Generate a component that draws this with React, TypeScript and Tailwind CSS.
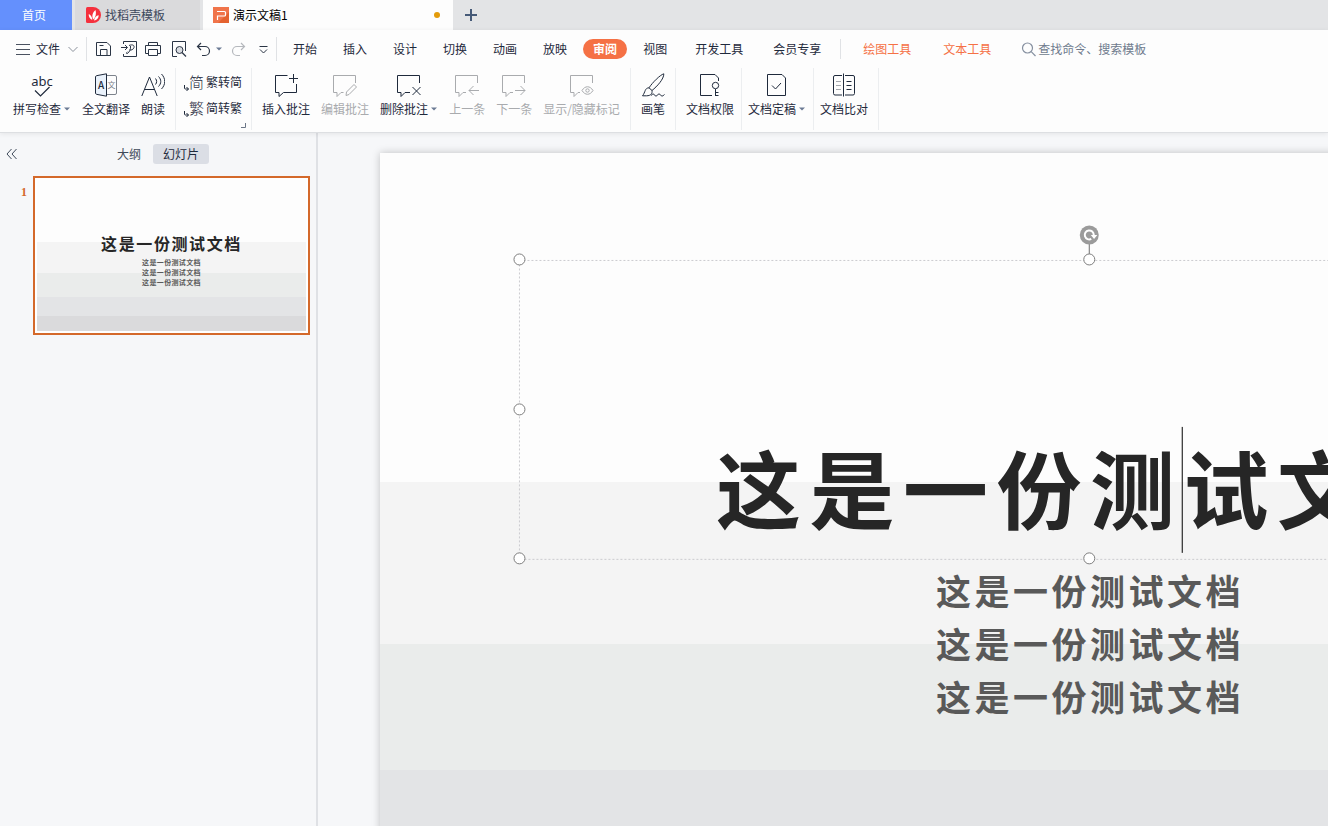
import React, { useState } from "react";

const TITLE = "这是一份测试文档";
const LINES = [TITLE, TITLE, TITLE];

const MAIN_TABS = ["开始", "插入", "设计", "切换", "动画", "放映", "审阅", "视图"];
const WIDE_TABS = ["开发工具", "会员专享"];
const TOOL_TABS = ["绘图工具", "文本工具"];

export default function App() {
    const [activeTab, setActiveTab] = useState("审阅");
    const [panel, setPanel] = useState<"outline" | "slides">("slides");

    return (
        <div className="h-screen flex flex-col overflow-hidden bg-[#f6f7f9] text-xs leading-4 text-[#1f2a3c] font-['Noto_Sans_CJK_SC',sans-serif]">
            <TitleBar />

            <header className="relative z-10 bg-[#fdfdfd] border-b border-[#dddfe2] shadow-[0_1px_5px_rgba(0,0,0,0.08)]">
                {/* Menu row */}
                <div className="flex items-center h-[38px] pl-4 whitespace-nowrap">
                    <button className="flex items-center gap-[6px]">
                        <Icon size={14} d="M0 2.5h14M0 7.5h14M0 12.5h14" className="text-[#4a5260]" />
                        文件
                        <Icon size={10} d="M.5 3l4.5 4.5L9.5 3" className="ml-[2px] text-[#8b919b]" />
                    </button>
                    <Divider className="h-6 ml-2" />
                    <QuickAccess />
                    <Divider className="h-6" />

                    <nav className="flex items-center gap-[6px] ml-[6px]">
                        {MAIN_TABS.map((tab) => (
                            <button
                                key={tab}
                                onClick={() => setActiveTab(tab)}
                                className={`h-5 px-[10px] rounded-full ${activeTab === tab ? "bg-[#f57145] text-white font-bold" : ""}`}
                            >
                                {tab}
                            </button>
                        ))}
                        {WIDE_TABS.map((tab) => (
                            <button
                                key={tab}
                                onClick={() => setActiveTab(tab)}
                                className={`h-5 px-3 rounded-full ${activeTab === tab ? "bg-[#f57145] text-white font-bold" : ""}`}
                            >
                                {tab}
                            </button>
                        ))}
                    </nav>
                    <Divider className="h-5 ml-[7px]" />
                    <nav className="flex items-center gap-2 ml-[10px]">
                        {TOOL_TABS.map((tab) => (
                            <button
                                key={tab}
                                onClick={() => setActiveTab(tab)}
                                className={`h-5 px-3 rounded-full ${activeTab === tab ? "bg-[#f57145] text-white font-bold" : "text-[#f57145]"}`}
                            >
                                {tab}
                            </button>
                        ))}
                    </nav>
                    <label className="flex items-center gap-[2px] ml-[18px] text-[#8690a0]">
                        <svg width="15" height="15" viewBox="0 0 15 15" fill="none" stroke="currentColor" strokeWidth="1.2">
                            <circle cx="6.5" cy="6" r="5" />
                            <path d="M10.200 9.700L14.500 14" />
                        </svg>
                        <input
                            type="text"
                            aria-label="查找命令、搜索模板"
                            placeholder="查找命令、搜索模板"
                            className="w-40 bg-transparent outline-none placeholder:text-[#6f7b8d]"
                        />
                    </label>
                </div>

                <Ribbon />
            </header>

            <div className="flex flex-1 min-h-0">
                {/* Slide panel */}
                <aside className="w-[318px] shrink-0 border-r-2 border-[#dfe1e5]">
                    <div className="flex items-center h-[42px] pl-[6px]">
                        <button aria-label="收起">
                            <Icon size={12} d="M5.5 1L1 6l4.5 5M10.500 1L6 6l4.500 5" className="text-[#3f4a5a]" />
                        </button>
                        <div className="flex items-center gap-px ml-[88px]">
                            <button
                                onClick={() => setPanel("outline")}
                                className={`h-5 px-[11px] rounded-[3px] ${panel === "outline" ? "bg-[#dbdee5]" : "text-[#3f4a5a]"}`}
                            >
                                大纲
                            </button>
                            <button
                                onClick={() => setPanel("slides")}
                                className={`h-5 px-[10px] rounded-[3px] ${panel === "slides" ? "bg-[#dbdee5]" : "text-[#3f4a5a]"}`}
                            >
                                幻灯片
                            </button>
                        </div>
                    </div>
                    <div className="flex mt-px pr-[6px]">
                        <span className="w-[33px] pt-2 pr-[6px] text-right font-bold text-[#d4692b] font-['Liberation_Serif',serif]">1</span>
                        <button className="flex-1 border-2 border-[#d4692b] p-[2px] bg-white">
                            <div className="relative aspect-video overflow-hidden pt-[51px] text-center">
                                <Bands />
                                <p className="relative text-base leading-6 font-bold tracking-widest text-[#262626]">{TITLE}</p>
                                <div className="relative mt-[2px]">
                                    {LINES.map((line, i) => (
                                        <p key={i} className="text-[7px] leading-[10px] font-bold tracking-wider text-[#595959]">{line}</p>
                                    ))}
                                </div>
                            </div>
                        </button>
                    </div>
                </aside>

                {/* Canvas */}
                <main className="flex-1 min-w-0 overflow-hidden pt-5 pl-[62px]">
                    <Slide />
                </main>
            </div>
        </div>
    );
}

// ------------------- Title bar -------------------

function TitleBar() {
    return (
        <div className="flex h-[30px] shrink-0 bg-[#e3e4e6]">
            <button className="w-[72px] pr-1 bg-[#6490fd] text-white">首页</button>
            <button className="flex items-center gap-1 w-[125px] ml-[3px] pl-[11px] bg-[#dadadc] text-[#3d485c]">
                <svg width="15" height="16" viewBox="0 0 15 16">
                    <path d="M0 1.500Q0 0 1.500 0H7a8 8 0 0 1 0 16H1.500Q0 16 0 14.500z" fill="#f5303d" />
                    <path d="M7.300 12.500C5.500 9.500 6.500 5.500 9.500 3c1 3.500.3 7-2.200 9.500zM6.300 13C3.800 12 2.300 9.500 2.800 7c2.200 1.200 3.500 3.300 3.500 6zM8 13.500c.5-3 2-4.800 4.700-5.300 0 2.800-1.700 4.800-4.700 5.300z" fill="#fff" />
                </svg>
                找稻壳模板
            </button>
            <div className="flex items-center w-[250px] ml-[3px] pl-[10px] pr-[13px] bg-[#fdfdfd] text-black">
                <svg width="16" height="16" viewBox="0 0 16 16" className="mr-1">
                    <path d="M0 0h16v16H0z" fill="#f0744a" />
                    <path d="M16 5v11H5z" fill="#e4622f" />
                    <path d="M4 4.500h7.500q1 0 1 1V8q0 1-1 1H4.500v4" fill="none" stroke="#fff" strokeWidth="1.200" />
                </svg>
                演示文稿1
                <span className="ml-auto w-[6px] h-[6px] rounded-full bg-[#e39b0b]" />
            </div>
            <button aria-label="新建" className="w-9 flex items-center justify-center text-[#465a78]">
                <Icon size={12} d="M6 0v12M0 6h12" strokeWidth={2} />
            </button>
        </div>
    );
}

function QuickAccess() {
    return (
        <div className="flex items-center pl-[9px] pr-2 text-[#2b3545]">
            <button aria-label="保存">
                <Icon size={16} d="M.5 1.500h10.500L14.500 5v9.500H.5zM4.500 14.500V8.500h6.500v6M3.500 4.500h4" />
            </button>
            <button aria-label="输出为PDF" className="ml-[9px]">
                <Icon size={16} d="M2.500 3V.5h13v15h-13V13M0 6.500h6M4 4l2.500 2.500L4 9M8 4.500c4-1.500 5.500 0 5 2S10 9.500 8.500 9M9.500 5c.5 3-1 6-3 7.500-1.500.5-1.500-1 0-1.500" />
            </button>
            <button aria-label="打印" className="ml-2">
                <Icon size={16} d="M3.500 4.500v-3h9v3M3.500 12.500h-3v-8h15v8h-3M3.500 8.500h9v6h-9z" />
            </button>
            <button aria-label="打印预览" className="ml-[10px]">
                <svg width="16" height="16" viewBox="0 0 16 16" fill="none" stroke="currentColor">
                    <path d="M6 15.500H1.500V.5h13V10" />
                    <circle cx="8.500" cy="9" r="3.500" fill="#d9dce1" />
                    <path d="M11 11.500l4 4" strokeWidth="1.300" />
                </svg>
            </button>
            <button aria-label="撤销" className="ml-[9px]">
                <Icon size={15} d="M5 1L1.500 4.500 5 8M1.500 4.500H9a4.500 4.500 0 0 1 0 9H6" strokeWidth={1.2} />
            </button>
            <button aria-label="撤销选项" className="ml-1">
                <Caret />
            </button>
            <button aria-label="恢复" className="ml-2 text-[#b5b8bd]">
                <Icon size={15} d="M10 1l3.500 3.500L10 8M13.500 4.500H6a4.500 4.500 0 0 0 0 9h3" strokeWidth={1.2} />
            </button>
            <button aria-label="自定义" className="ml-[13px]">
                <Icon size={9} d="M.5 1.500h8M1 4.500L4.500 8 8 4.500" />
            </button>
        </div>
    );
}

// ------------------- Ribbon -------------------

const BUBBLE = "M22.500 10V2.500H.5V19.500H4v4l4-4";

function Ribbon() {
    return (
        <div className="flex h-16 pl-[3px] pb-[2px]">
            <Group className="px-[10px]">
                <Tool label="拼写检查" menu icon={
                    <span className="relative flex flex-col items-center h-6">
                        <span className="text-[13px] leading-4 font-['Noto_Sans',sans-serif]">abc</span>
                        <Icon size={16} d="M1 7.500L6.500 13 15.500 4" strokeWidth={1.2} className="absolute top-[10px]" />
                    </span>
                } />
                <Tool label="全文翻译" icon={
                    <svg width="24" height="24" viewBox="0 0 24 24" fill="none" stroke="currentColor">
                        <path d="M12.500 2.500h8.500q1.500 0 1.500 1.500v16q0 1.500-1.500 1.500h-8.500" stroke="#7d838c" />
                        <path d="M1.500 4q0-1 1-1.300L12.500.8v22.400L2.500 21.300q-1-.3-1-1.300z" fill="#eaf2fb" />
                        <text x="7" y="15.500" textAnchor="middle" fontSize="10" fontWeight="500" fill="currentColor" stroke="none">A</text>
                        <text x="17.500" y="15" textAnchor="middle" fontSize="8" fill="#7d838c" stroke="none">文</text>
                    </svg>
                } />
                <Tool label="朗读" icon={
                    <Icon size={24} d="M.8 23L8.500 4l7.700 19M3.500 16.500h10M14.500 5.500c1.500 2 1.500 4 0 6M17.500 3.500c3 3 3 7 0 10M20.500 1c4.300 4.500 4.300 10.500 0 15" />
                } />
            </Group>

            <div className="relative flex flex-col gap-[10px] pt-[6px] pl-2 pr-[9px] border-r border-[#eceef0]">
                <Convert glyph="简" label="繁转简" />
                <Convert glyph="繁" label="简转繁" />
                <Icon size={5} d="M4.500 0v4.500H0" className="absolute right-[5px] bottom-[2px] text-[#6b7687]" />
            </div>

            <Group className="px-[10px]">
                <Tool label="插入批注" icon={
                    <Icon size={24} d="M13.500 2.500H1.500V19.500H5v4l4.500-4h13V11M19.500 1v9M15 5.500h9" />
                } />
                <Tool label="编辑批注" disabled icon={
                    <Icon size={24} d={BUBBLE + "h2.500M13 22.500l.5-3.500 7.500-7.500 2.500 2.500-7.500 7.500z"} />
                } />
                <Tool label="删除批注" menu icon={
                    <Icon size={24} d={BUBBLE + "h5M15.500 14l8 8M23.500 14l-8 8"} />
                } />
                <Tool label="上一条" disabled icon={
                    <Icon size={24} d={BUBBLE + "h3M24 17.500H14M18.500 13L14 17.500l4.500 4.500"} />
                } />
                <Tool label="下一条" disabled icon={
                    <Icon size={24} d={BUBBLE + "h3M13 17.500h10M18.500 13l4.500 4.500-4.500 4.500"} />
                } />
                <Tool label="显示/隐藏标记" disabled icon={
                    <svg width="24" height="24" viewBox="0 0 24 24" fill="none" stroke="currentColor">
                        <path d={BUBBLE + "h2"} />
                        <path d="M12 17.500c3-5 8-5 11 0-3 5-8 5-11 0z" />
                        <circle cx="17.500" cy="17.500" r="1.700" />
                    </svg>
                } />
            </Group>

            <Group className="px-[10px]">
                <Tool label="画笔" icon={
                    <Icon size={24} d="M22.800.8C19 2 11.500 9.500 8 14.800l3 2.700C16 13.500 23 6 22.800.8zM8 14.800c-4.500.2-3.500 4.500-6.500 8h4c4.500 0 6-2.500 5.500-5.300M10 22.500c2-2 2.500-2 3.500-.5s2 1.500 3 0 2-1.500 3 0 2 1.500 4-.5" />
                } />
            </Group>
            <Group className="pl-[10px] pr-[7px]">
                <Tool label="文档权限" icon={
                    <svg width="24" height="24" viewBox="0 0 24 24" fill="none" stroke="currentColor">
                        <path d="M20.500 8V5l-3.500-3.500H2.500v21H14" />
                        <circle cx="17.500" cy="12.500" r="3.200" />
                        <path d="M17.500 16v7M17.500 19.500h3M17.500 22.500h3" />
                    </svg>
                } />
            </Group>
            <Group className="pl-[6px] pr-[7px]">
                <Tool label="文档定稿" menu icon={
                    <Icon size={24} d="M2.500 1.500h14.500l3.500 3.500v17.500h-18zM7 12.500l3.500 3.500 5.500-6" />
                } />
            </Group>
            <Group className="pl-[6px] pr-[10px]">
                <Tool label="文档比对" icon={
                    <svg width="24" height="24" viewBox="0 0 24 24" fill="none" stroke="currentColor">
                        <path d="M10 2.500H3q-1.500 0-1.500 1.500v16.500q0 1.500 1.500 1.500h7M13 2.500h8q1.500 0 1.500 1.500v16.500q0 1.500-1.500 1.500h-8M11.500.5v23M14.500 8.500h5M14.500 12.500h5M14.500 16.500h5" />
                        <path d="M4 8.500h5M4 12.500h5M4 16.500h5" stroke="#a4a8ae" />
                    </svg>
                } />
            </Group>
        </div>
    );
}

function Group({ children, className }: { children: React.ReactNode, className: string }) {
    return (
        <div className={`flex gap-[11px] pt-[5px] border-r border-[#eceef0] ${className}`}>
            {children}
        </div>
    );
}

function Tool({ icon, label, menu = false, disabled = false }: { icon: React.ReactNode, label: string, menu?: boolean, disabled?: boolean }) {
    return (
        <button disabled={disabled} className={`flex flex-col items-center gap-1 whitespace-nowrap ${disabled ? "text-[#a9abae]" : ""}`}>
            {icon}
            <span className="flex items-center gap-[2px]">
                {label}
                {menu && <Caret />}
            </span>
        </button>
    );
}

function Convert({ glyph, label }: { glyph: string, label: string }) {
    return (
        <button className="flex items-center h-4 whitespace-nowrap">
            <Icon size={5} d="M.5 0v3q0 1 1 1h3M2.500 2l2 2-2 2" className="self-end overflow-visible" />
            <span aria-hidden="true" className="mr-[2px] text-[15px] leading-4 font-light">{glyph}</span>
            {label}
        </button>
    );
}

// ------------------- Slide -------------------

function Slide() {
    return (
        <div className="relative w-[1420px] aspect-video text-center shadow-[0_0_8px_rgba(0,0,0,0.22)]">
            <Bands />
            <div className="relative pt-[107px]">
                <div className="flex items-end justify-center h-[299px] mx-[140px] pb-[10px]">
                    <h1 className="text-[85px] leading-[126px] font-bold tracking-widest whitespace-nowrap text-[#262626]">{TITLE}</h1>
                </div>
                <div className="mt-1">
                    {LINES.map((line, i) => (
                        <p key={i} className="text-[35px] leading-[53px] font-bold tracking-widest text-[#595959]">{line}</p>
                    ))}
                </div>
            </div>
            <Selection />
        </div>
    );
}

// Background steps, shared by the slide and its thumbnail
function Bands() {
    return (
        <div className="absolute inset-0 flex flex-col bg-[#fdfdfd]">
            <div className="h-[41.2%]" />
            <div className="h-[20.3%] bg-[#f4f4f4]" />
            <div className="h-[15.8%] bg-[#eaeceb]" />
            <div className="h-[12.7%] bg-[#e3e4e6]" />
            <div className="flex-1 bg-[#dadadc]" />
        </div>
    );
}

function Selection() {
    const handles = [[140, 106], [710, 106], [1280, 106], [140, 256], [1280, 256], [140, 405], [710, 405], [1280, 405]];

    return (
        <svg className="absolute inset-0 w-full h-full" viewBox="0 0 1420 799" preserveAspectRatio="xMinYMin" fill="none">
            <rect x="139.500" y="107.500" width="1140" height="299" stroke="#cbcbcf" strokeDasharray="2 2" />
            <path d="M709.500 91v10" stroke="#6e6e6e" />
            {handles.map(([x, y]) => (
                <circle key={`${x}-${y}`} cx={x - 0.5} cy={y + 0.5} r="5.500" fill="#fff" stroke="#7c7c7c" />
            ))}
            <circle cx="709.500" cy="82" r="9.500" fill="#9b9b9b" />
            <path d="M711.500 86a4.500 4.500 0 1 1 2.500-4" stroke="#fff" strokeWidth="2" />
            <path d="M711 82h6.500l-3.200 4z" fill="#fff" />
            <path d="M802.500 274v126" stroke="#000" />
        </svg>
    );
}

// ------------------- Small parts -------------------

function Icon({ size, d, strokeWidth = 1, className = "" }: { size: number, d: string, strokeWidth?: number, className?: string }) {
    return (
        <svg width={size} height={size} viewBox={`0 0 ${size} ${size}`} fill="none" stroke="currentColor" strokeWidth={strokeWidth} className={className}>
            <path d={d} />
        </svg>
    );
}

function Caret() {
    return (
        <svg width="8" height="6" viewBox="0 0 8 6" className="text-[#6b7a94]">
            <path d="M1 1.500h6L4 4.500z" fill="currentColor" />
        </svg>
    );
}

function Divider({ className }: { className: string }) {
    return <div className={`w-px bg-[#e0e2e5] ${className}`} />;
}
